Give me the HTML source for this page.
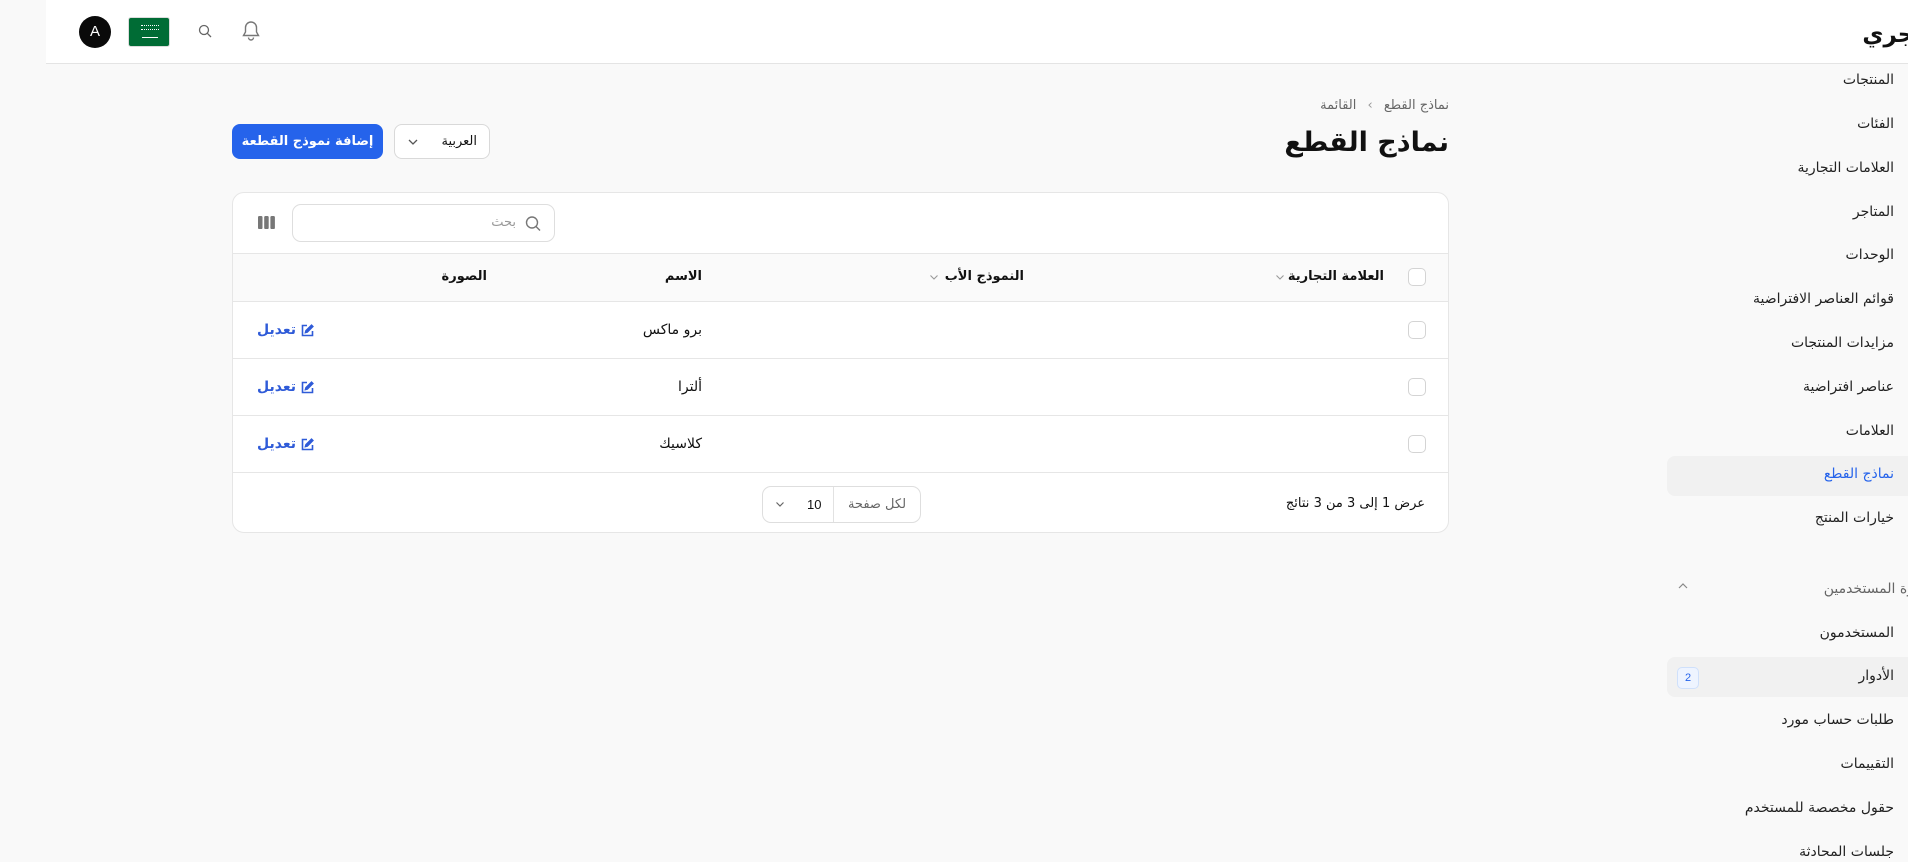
<!DOCTYPE html>
<html lang="ar" dir="rtl">
<head>
<meta charset="utf-8">
<style>
*{box-sizing:border-box;margin:0;padding:0}
html,body{width:1908px;height:860px;overflow:hidden;background:#f9f9f9;font-family:"DejaVu Sans","Liberation Sans",sans-serif;color:#111;}
.abs{position:absolute}
.header{position:absolute;left:46px;top:0;width:1862px;height:64px;background:#fff;border-bottom:1px solid #e4e4e4}
.side{position:absolute;left:1667px;top:64px;width:241px;height:796px;}
.si{position:absolute;right:14px;font-size:14px;color:#222;white-space:nowrap;line-height:20px}
.card{position:absolute;left:232px;top:192px;width:1217px;height:341px;background:#fff;border:1px solid #e6e6e6;border-radius:12px;overflow:hidden}
.row{position:absolute;left:0;width:100%;border-top:1px solid #e6e6e6}
.cb{position:absolute;right:22px;width:18px;height:18px;border:1px solid #d4d4d4;border-radius:5px;background:#fff}
.th{position:absolute;font-size:13px;font-weight:bold;line-height:20px;white-space:nowrap}
.td{position:absolute;font-size:14px;line-height:20px;white-space:nowrap}
.edit{position:absolute;left:24px;font-size:14px;font-weight:bold;color:#2f5bd8;line-height:20px;display:flex;align-items:center;gap:5px;direction:ltr}
</style>
</head>
<body>
<div class="header"></div>
<div class="abs" style="left:79px;top:16px;width:32px;height:32px;border-radius:50%;background:#0a0a0a;color:#fff;font-family:'Liberation Sans',sans-serif;font-size:15px;text-align:center;line-height:32px">A</div>
<div class="abs" style="left:128px;top:17px;width:42px;height:30px;border-radius:3px;background:#006c35;border:1px solid #dcdcdc">
  <div class="abs" style="left:12px;top:7px;width:18px;height:5px;border-top:1px dotted #fff;border-bottom:1px dotted #fff"></div>
  <div class="abs" style="left:13px;top:19px;width:16px;height:1px;background:#fff"></div>
</div>
<svg class="abs" style="left:197px;top:23px" width="16" height="16" viewBox="0 0 16 16" fill="none" stroke="#666" stroke-width="1.3"><circle cx="7" cy="7" r="4.5"/><path d="M10.3 10.3L14 14"/></svg>
<svg class="abs" style="left:241px;top:20px" width="20" height="22" viewBox="0 0 20 22" fill="none" stroke="#777" stroke-width="1.4"><path d="M10 2a5.5 5.5 0 0 0-5.5 5.5v4.5L2.5 15.5h15L15.5 12V7.5A5.5 5.5 0 0 0 10 2z"/><path d="M7.5 17.5a2.5 2.5 0 0 0 5 0"/></svg>
<div class="abs" style="right:-30px;top:20px;font-size:23px;font-weight:bold;line-height:30px;white-space:nowrap">متجري</div>

<div class="side">
  <div class="si" style="top:6px">المنتجات</div>
  <div class="si" style="top:50px">الفئات</div>
  <div class="si" style="top:94px">العلامات التجارية</div>
  <div class="si" style="top:138px">المتاجر</div>
  <div class="si" style="top:181px">الوحدات</div>
  <div class="si" style="top:225px">قوائم العناصر الافتراضية</div>
  <div class="si" style="top:269px">مزايدات المنتجات</div>
  <div class="si" style="top:313px">عناصر افتراضية</div>
  <div class="si" style="top:357px">العلامات</div>
  <div class="abs" style="left:0;top:392px;width:241px;height:40px;background:#f1f1f1;border-radius:8px 0 0 8px"></div>
  <div class="si" style="top:400px;color:#2563eb">نماذج القطع</div>
  <div class="si" style="top:444px">خيارات المنتج</div>
  <div class="si" style="top:515px;right:-20px;color:#666">إدارة المستخدمين</div>
  <svg class="abs" style="left:10px;top:517px" width="12" height="10" viewBox="0 0 12 10" fill="none" stroke="#888" stroke-width="1.2"><path d="M2 7l4-4 4 4"/></svg>
  <div class="si" style="top:559px">المستخدمون</div>
  <div class="abs" style="left:0;top:593px;width:241px;height:40px;background:#f1f1f1;border-radius:8px 0 0 8px"></div>
  <div class="si" style="top:602px">الأدوار</div>
  <div class="abs" style="left:10px;top:603px;width:22px;height:22px;border:1px solid #cfe0fb;background:#eef4ff;border-radius:5px;color:#2563eb;font-size:11px;text-align:center;line-height:20px;font-family:'Liberation Sans',sans-serif">2</div>
  <div class="si" style="top:646px">طلبات حساب مورد</div>
  <div class="si" style="top:690px">التقييمات</div>
  <div class="si" style="top:734px">حقول مخصصة للمستخدم</div>
  <div class="si" style="top:778px">جلسات المحادثة</div>
</div>

<div class="abs" style="right:459px;top:97px;font-size:13px;color:#666;white-space:nowrap;line-height:18px">نماذج القطع <span style="color:#999;margin:0 7px">&#8250;</span> القائمة</div>
<div class="abs" style="right:459px;top:125px;font-size:27px;font-weight:bold;line-height:36px;white-space:nowrap">نماذج القطع</div>

<div class="abs" style="left:394px;top:124px;width:96px;height:35px;background:#fff;border:1px solid #d9d9d9;border-radius:8px">
  <div class="abs" style="right:12px;top:7px;font-size:13px;line-height:20px">العربية</div>
  <svg class="abs" style="left:12px;top:12px" width="12" height="10" viewBox="0 0 12 10" fill="none" stroke="#555" stroke-width="1.3"><path d="M2 3l4 4 4-4"/></svg>
</div>
<div class="abs" style="left:232px;top:124px;width:151px;height:35px;background:#2563eb;border-radius:8px;color:#fff;font-size:13px;font-weight:bold;text-align:center;line-height:35px;white-space:nowrap">إضافة نموذج القطعة</div>

<div class="card">
  <div class="abs" style="left:59px;top:11px;width:263px;height:38px;border:1px solid #dedede;border-radius:9px">
    <svg class="abs" style="right:12px;top:10px" width="18" height="18" viewBox="0 0 18 18" fill="none" stroke="#777" stroke-width="1.4"><circle cx="8" cy="7.5" r="5.5"/><path d="M12 11.5l4 4"/></svg>
    <div class="abs" style="right:38px;top:9px;font-size:13px;color:#999;line-height:18px">بحث</div>
  </div>
  <svg class="abs" style="left:25px;top:22px" width="17" height="15" viewBox="0 0 17 15" fill="#777"><rect x="0" y="1" width="4.5" height="13" rx="1.3"/><rect x="6.2" y="1" width="4.5" height="13" rx="1.3"/><rect x="12.4" y="1" width="4.5" height="13" rx="1.3"/></svg>

  <div class="row" style="top:60px;height:48px;background:#fafafa">
    <div class="cb" style="top:14px"></div>
    <div class="th" style="right:64px;top:13px">العلامة التجارية</div>
    <svg class="abs" style="left:1042px;top:19px" width="10" height="8" viewBox="0 0 10 8" fill="none" stroke="#999" stroke-width="1.1"><path d="M1.5 2.5l3.5 3.5 3.5-3.5"/></svg>
    <div class="th" style="right:424px;top:13px">النموذج الأب</div>
    <svg class="abs" style="left:696px;top:19px" width="10" height="8" viewBox="0 0 10 8" fill="none" stroke="#999" stroke-width="1.1"><path d="M1.5 2.5l3.5 3.5 3.5-3.5"/></svg>
    <div class="th" style="right:746px;top:13px">الاسم</div>
    <div class="th" style="right:961px;top:13px">الصورة</div>
  </div>
  <div class="row" style="top:108px;height:57px">
    <div class="cb" style="top:19px"></div>
    <div class="td" style="right:746px;top:18px">برو ماكس</div>
    <div class="edit" style="top:18px"><span>تعديل</span><svg width="13" height="13" viewBox="0 0 13 13" fill="none" stroke="#2f5bd8" stroke-width="1.6"><path d="M6 1.5H1.5v10h10V7"/><path d="M10.5 1.2l1.3 1.3-5.5 5.5-1.8.5.5-1.8z" fill="#2f5bd8"/></svg></div>
  </div>
  <div class="row" style="top:165px;height:57px">
    <div class="cb" style="top:19px"></div>
    <div class="td" style="right:746px;top:18px">ألترا</div>
    <div class="edit" style="top:18px"><span>تعديل</span><svg width="13" height="13" viewBox="0 0 13 13" fill="none" stroke="#2f5bd8" stroke-width="1.6"><path d="M6 1.5H1.5v10h10V7"/><path d="M10.5 1.2l1.3 1.3-5.5 5.5-1.8.5.5-1.8z" fill="#2f5bd8"/></svg></div>
  </div>
  <div class="row" style="top:222px;height:57px">
    <div class="cb" style="top:19px"></div>
    <div class="td" style="right:746px;top:18px">كلاسيك</div>
    <div class="edit" style="top:18px"><span>تعديل</span><svg width="13" height="13" viewBox="0 0 13 13" fill="none" stroke="#2f5bd8" stroke-width="1.6"><path d="M6 1.5H1.5v10h10V7"/><path d="M10.5 1.2l1.3 1.3-5.5 5.5-1.8.5.5-1.8z" fill="#2f5bd8"/></svg></div>
  </div>
  <div class="row" style="top:279px;height:62px">
    <div class="td" style="right:23px;top:21px;font-size:13px">عرض 1 إلى 3 من 3 نتائج</div>
    <div class="abs" style="left:529px;top:13px;width:159px;height:37px;border:1px solid #dedede;border-radius:9px;overflow:hidden">
      <div class="abs" style="right:0;top:0;width:87px;height:100%;border-left:1px solid #e2e2e2;font-size:13px;color:#666;text-align:center;line-height:35px">لكل صفحة</div>
      <div class="abs" style="left:44px;top:0;font-size:13px;line-height:35px;font-family:'Liberation Sans',sans-serif">10</div>
      <svg class="abs" style="left:12px;top:13px" width="10" height="8" viewBox="0 0 10 8" fill="none" stroke="#666" stroke-width="1.2"><path d="M1.5 2.5l3.5 3.5 3.5-3.5"/></svg>
    </div>
  </div>
</div>
</body>
</html>
